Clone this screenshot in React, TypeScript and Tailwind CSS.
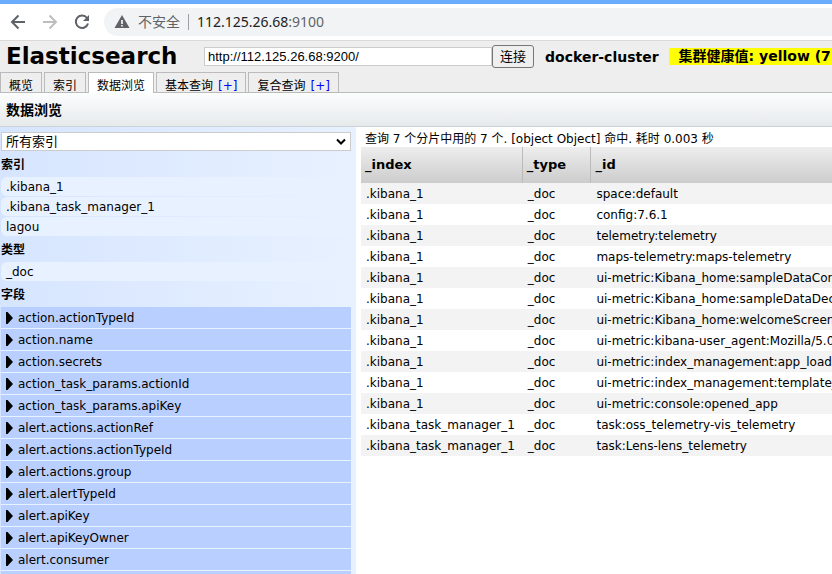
import clsx from "clsx"

const tabs = [
  { label: "概览" },
  { label: "索引" },
  { label: "数据浏览", active: true },
  { label: "基本查询", add: true },
  { label: "复合查询", add: true },
]

const indices = [".kibana_1", ".kibana_task_manager_1", "lagou"]

const fields = [
  "action.actionTypeId",
  "action.name",
  "action.secrets",
  "action_task_params.actionId",
  "action_task_params.apiKey",
  "alert.actions.actionRef",
  "alert.actions.actionTypeId",
  "alert.actions.group",
  "alert.alertTypeId",
  "alert.apiKey",
  "alert.apiKeyOwner",
  "alert.consumer",
  "alert.createdBy",
]

const rows = [
  [".kibana_1", "space:default"],
  [".kibana_1", "config:7.6.1"],
  [".kibana_1", "telemetry:telemetry"],
  [".kibana_1", "maps-telemetry:maps-telemetry"],
  [".kibana_1", "ui-metric:Kibana_home:sampleDataConfirm"],
  [".kibana_1", "ui-metric:Kibana_home:sampleDataDecline"],
  [".kibana_1", "ui-metric:Kibana_home:welcomeScreenMount"],
  [".kibana_1", "ui-metric:kibana-user_agent:Mozilla/5.0"],
  [".kibana_1", "ui-metric:index_management:app_load"],
  [".kibana_1", "ui-metric:index_management:template_list"],
  [".kibana_1", "ui-metric:console:opened_app"],
  [".kibana_task_manager_1", "task:oss_telemetry-vis_telemetry"],
  [".kibana_task_manager_1", "task:Lens-lens_telemetry"],
]

const BrowserBar = () => (
  <div className="flex h-[41px] shrink-0 items-center border-t-4 border-b border-t-[#6aacfb] border-b-[#d9d9d9] bg-white pl-2 font-['Noto_Sans','Noto_Sans_CJK_SC',sans-serif]">
    <button aria-label="Back" className="flex w-8 shrink-0 pl-0.5">
      <svg className="size-4" viewBox="0 0 16 16" fill="none" stroke="#5f6368" strokeWidth="2">
        <path d="M15 8H2M8.5 1.5 2 8l6.5 6.5" />
      </svg>
    </button>
    <button aria-label="Forward" className="flex w-8 shrink-0 pl-0.5">
      <svg className="size-4" viewBox="0 0 16 16" fill="none" stroke="#bcbec0" strokeWidth="2">
        <path d="M1 8h13M7.5 1.5 14 8l-6.5 6.5" />
      </svg>
    </button>
    <button aria-label="Reload" className="flex w-8 shrink-0 pl-0.5">
      <svg className="size-4" viewBox="0 0 16 16" fill="none">
        <path d="M13 4A6.2 6.2 0 1 0 14 9.5" stroke="#5f6368" strokeWidth="2" />
        <path d="M15 1v6H9z" fill="#5f6368" />
      </svg>
    </button>
    <div className="flex h-7 flex-1 items-center rounded-l-full bg-[#f1f3f4] pl-2.5 text-sm text-[#5f6368]">
      <svg className="size-4 shrink-0" viewBox="0 0 16 16">
        <path d="M8 1 15.5 14H.5z" fill="#5f6368" />
        <path d="M7.2 6h1.6v4H7.2zM7.2 11h1.6v1.6H7.2z" fill="#fff" />
      </svg>
      <span className="ml-2">不安全</span>
      <span className="mx-2 h-4 w-px bg-[#9aa0a6]" />
      <span>
        <span className="text-[#202124]">112.125.26.68</span>:9100
      </span>
    </div>
  </div>
)

const Header = () => (
  <header className="shrink-0 border-b border-[#bbb] bg-[#eee]">
    <div className="flex h-[31px] items-center whitespace-nowrap">
      <h1 className="w-[204px] shrink-0 pl-1.5 text-[23px] leading-[31px] font-bold">
        Elasticsearch
      </h1>
      <input
        aria-label="Elasticsearch URL"
        defaultValue="http://112.125.26.68:9200/"
        className="h-[19px] w-72 shrink-0 border border-[#ccc] bg-white px-[3px] font-['Liberation_Sans',sans-serif] text-[13px] outline-none"
      />
      <button className="h-[23px] shrink-0 rounded-[3px] border border-[#767676] bg-[#efefef] px-[7px] text-[13px] leading-5">
        连接
      </button>
      <span className="ml-[11px] text-sm font-bold">docker-cluster</span>
      <span className="ml-2.5 h-[17px] bg-[#ff0] px-2.5 text-sm leading-[17px] font-bold">
        集群健康值: yellow (7 of 10)
      </span>
    </div>
    <nav className="flex h-5 gap-0.5">
      {tabs.map(({ label, active, add }) => (
        <div
          key={label}
          className={clsx(
            "flex border border-b-0 border-[#bbb] px-2 leading-[27px]",
            active ? "-mb-px h-[21px] bg-white" : "h-5"
          )}
        >
          <button className="flex h-[19px]">{label}</button>
          {add && (
            <a href="#add" className="ml-[5px] text-[#00f]">
              [+]
            </a>
          )}
        </div>
      ))}
    </nav>
  </header>
)

const Group = ({ title, items }: { title: string; items: string[] }) => (
  <section>
    <h3 className="h-[26px] leading-7 font-bold">{title}</h3>
    <ul className="flex flex-col gap-px">
      {items.map((item) => (
        <li
          key={item}
          className="h-[19px] rounded-l-md bg-[#e8f1ff] pl-[5px] leading-5"
        >
          {item}
        </li>
      ))}
    </ul>
  </section>
)

const Sidebar = () => (
  <aside className="w-[356px] shrink-0 overflow-hidden bg-linear-to-r from-[#d6e5ff] to-[#e8f1ff] pt-[5px] pr-[5px] pl-px">
    <div className="relative">
      <select
        aria-label="索引"
        className="block h-[19px] w-full appearance-none border border-[#ccc] bg-white pl-1 text-[13px] leading-[17px]"
      >
        <option>所有索引</option>
      </select>
      <svg
        className="pointer-events-none absolute top-1.5 right-1 h-2 w-3"
        viewBox="0 0 12 8"
        fill="none"
        stroke="#000"
        strokeWidth="2"
      >
        <path d="m2 1.5 4 4 4-4" />
      </svg>
    </div>
    <Group title="索引" items={indices} />
    <Group title="类型" items={["_doc"]} />
    <h3 className="h-[26px] leading-7 font-bold">字段</h3>
    <ul>
      {fields.map((field) => (
        <li
          key={field}
          className="flex h-[22px] items-center border-b border-[#e8f1ff] bg-[#b9cfff] pl-[5px]"
        >
          <svg className="mr-[5px] h-3 w-[7px]" viewBox="0 0 7 12">
            <path d="M0 0h1.500L7 6l-5.500 6H0z" />
          </svg>
          {field}
        </li>
      ))}
    </ul>
  </aside>
)

const Results = () => (
  <main className="min-w-0 flex-1 overflow-hidden pl-[5px]">
    <p className="h-5 pl-1 leading-6 whitespace-nowrap">
      查询 7 个分片中用的 7 个. [object Object] 命中. 耗时 0.003 秒
    </p>
    <table className="w-full border-separate border-spacing-0 text-left whitespace-nowrap">
      <thead>
        <tr className="h-9 bg-linear-to-b from-[#eee] to-[#ccc] text-[13px]">
          <th className="border-r border-[#bbb] px-1 py-0">_index</th>
          <th className="border-r border-[#bbb] px-1 py-0">_type</th>
          <th className="w-full px-1 py-0">_id</th>
        </tr>
      </thead>
      <tbody>
        {rows.map(([index, id]) => (
          <tr key={id} className="h-[21px] odd:bg-[#f3f3f3]">
            <td className="pr-2 pl-[5px]">{index}</td>
            <td className="pr-9 pl-[5px]">_doc</td>
            <td className="pl-[5px]">{id}</td>
          </tr>
        ))}
      </tbody>
    </table>
  </main>
)

const App = () => (
  <div className="flex h-screen flex-col overflow-hidden bg-white font-['DejaVu_Sans','Noto_Sans_CJK_SC',sans-serif] text-xs leading-5 text-black">
    <BrowserBar />
    <Header />
    <h2 className="h-[34px] shrink-0 border-b border-[#ccd3d6] bg-linear-to-b from-[#fcfdfd] to-[#e6eaec] pl-1.5 text-sm leading-[34px] font-bold">
      数据浏览
    </h2>
    <div className="flex min-h-0 flex-1">
      <Sidebar />
      <Results />
    </div>
  </div>
)

export default App
